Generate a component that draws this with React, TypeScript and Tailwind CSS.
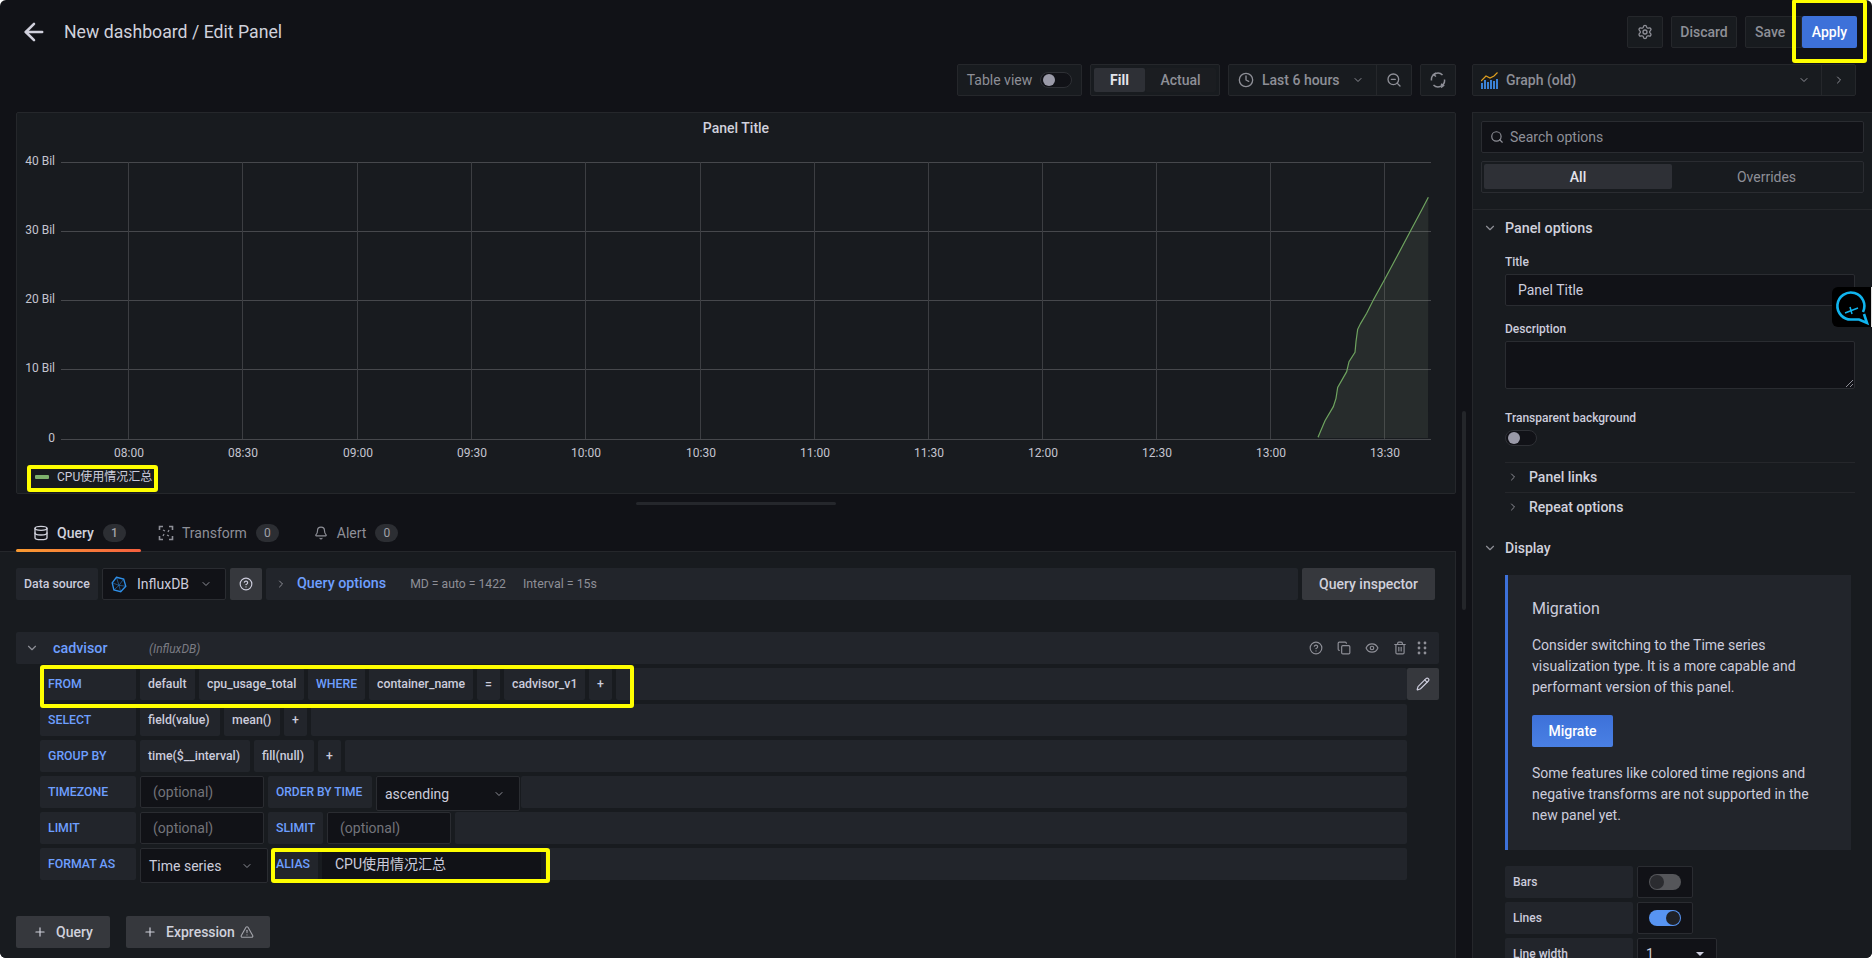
import React from "react";
import {
  ArrowLeft, Settings, Clock, ZoomOut, ChevronDown, ChevronRight, Search, Database, Bell,
  CircleHelp, Copy, Eye, Trash2, Pencil, Plus, TriangleAlert,
} from "lucide-react";

const Seg = ({ children, blue, cls = "" }: { children?: React.ReactNode; blue?: boolean; cls?: string }) => (
  <div className={`h-8 shrink-0 flex items-center whitespace-nowrap rounded-[2px] bg-[#22252b] px-2 text-[12.3px] font-medium ${blue ? "text-[#6e9fff]" : "text-[#ccccdc]"} ${cls}`}>{children}</div>
);
const Label = ({ children }: { children: React.ReactNode }) => <Seg blue cls="w-[96px]">{children}</Seg>;
const Fill = () => <div className="h-8 flex-1 rounded-[2px] bg-[#22252b]" />;
const Optional = ({ w }: { w: string }) => (
  <div className={`h-8 shrink-0 flex items-center rounded-[2px] border border-[#2a2c31] bg-[#111217] pl-[12px] text-sm text-[#73747a] ${w}`}>(optional)</div>
);
const Select = ({ text, w }: { text: string; w: string }) => (
  <div className={`h-[35px] shrink-0 flex items-center justify-between rounded-[2px] border border-[#2a2c31] bg-[#111217] pl-2 pr-[14px] text-sm text-[#ccccdc] ${w}`}>
    {text}
    <ChevronDown size={12} className="text-[#8e8f97]" />
  </div>
);
const Row = ({ children }: { children: React.ReactNode }) => <div className="flex h-8 w-[1367px] items-start gap-1">{children}</div>;

const Badge = ({ n }: { n: number }) => (
  <span className="ml-[9px] flex h-[18px] w-[23px] items-center justify-center rounded-full bg-[#2c2e33] text-xs text-[#a0a1a8]">{n}</span>
);

const xLabels = ["08:00", "08:30", "09:00", "09:30", "10:00", "10:30", "11:00", "11:30", "12:00", "12:30", "13:00", "13:30"];
const xs = [128, 242, 357, 471, 585, 700, 814, 928, 1042, 1156, 1270, 1384];
const ys: [string, number][] = [["40 Bil", 162], ["30 Bil", 231], ["20 Bil", 300], ["10 Bil", 369], ["0", 439]];
const curve = [[354, 772], [375, 722], [400, 680], [408, 655], [413, 622], [440, 575], [447, 545], [465, 517], [468, 485], [473, 448], [482, 430], [500, 400], [520, 360], [553, 300], [580, 250], [633, 150], [665, 90], [685, 52]]
  .map(([x, y]) => `${1200 + x / 3},${180 + y / 3}`).join(" ");

const Chart = () => (
  <svg width="1440" height="312" viewBox="16 150 1440 312" className="block" fontFamily="Roboto" fontSize="12" fill="#c4c4cf">
    {ys.map(([l, y]) => (
      <g key={l}>
        <line x1="61" x2="1431" y1={y + 0.5} y2={y + 0.5} stroke="#46484c" />
        <text x="55" y={y + 3} textAnchor="end">{l}</text>
      </g>
    ))}
    {xs.map((x, i) => (
      <g key={x}>
        <line x1={x + 0.5} x2={x + 0.5} y1="162" y2="439" stroke="#3c3e42" />
        <text x={x + 1} y="457" textAnchor="middle">{xLabels[i]}</text>
      </g>
    ))}
    <polygon points={`1318,438 ${curve} 1428,438`} fill="#8fa585" fillOpacity="0.13" />
    <polyline points={curve} fill="none" stroke="#6ea35f" strokeWidth="1.2" />
  </svg>
);

const TransformIcon = () => (
  <svg width="16" height="16" viewBox="0 0 16 16" fill="none" stroke="#8e8f97" strokeWidth="1.6">
    <path d="M1.500 5V1.500H5M11 1.500h3.500V5M14.500 11v3.500H11M5 14.500H1.500V11" />
    <path d="M5 5l2 1M11 5l-1 2M11 11l-2-1M5 11l1-2" strokeWidth="1.300" />
  </svg>
);
const SyncIcon = () => (
  <svg width="16" height="16" viewBox="0 0 16 16" fill="none" stroke="currentColor" strokeWidth="1.500">
    <path d="M1.500 8.500A6.500 6.500 0 0 1 12.500 3" />
    <path d="M14.500 7.500A6.500 6.500 0 0 1 3.500 13" />
    <path d="M6 1 3.500 2.500 6 4.500M11 12l2.500 1.500L11 15.500" transform="translate(0 0)" />
  </svg>
);
const GraphIcon = () => (
  <svg width="17" height="17" viewBox="0 0 17 17">
    <g fill="#3b82d6">
      <rect x="0" y="11" width="2" height="6" /><rect x="3" y="8" width="2" height="9" /><rect x="6" y="10" width="2" height="7" />
      <rect x="9" y="8" width="2" height="9" /><rect x="12" y="9" width="2" height="8" /><rect x="15" y="7" width="2" height="10" />
    </g>
    <path d="M0 9 L5 4 L9 6 L13 4 L16.500 0.500" fill="none" stroke="#e0a020" strokeWidth="1.200" />
  </svg>
);
const InfluxIcon = () => (
  <svg width="16" height="17" viewBox="0 0 18 20" fill="none" stroke="#2f8fe8" strokeWidth="1.600">
    <path d="M6 1.500 14.500 3.500 17 12 11 18.500 3 16.500 1 8Z" />
    <path d="M6 1.500 9 11 1 8M9 11l5.500-7.500M9 11l8 1M9 11 11 18.500M9 11 3 16.500" strokeWidth="0.600" />
  </svg>
);

const Frame = ({ cls }: { cls: string }) => <div className={`pointer-events-none absolute rounded-[3px] border-[4px] border-[#ffff00] ${cls}`} />;

const ToolBtn = ({ children, cls = "" }: { children: React.ReactNode; cls?: string }) => (
  <div className={`flex h-8 shrink-0 items-center justify-center rounded-[2px] border border-[#25272b] bg-[#181b1f] text-sm font-medium text-[#8e8f97] ${cls}`}>{children}</div>
);

const Knob = () => <div className="flex h-4 w-8 items-center rounded-full border border-[#2e3035] bg-[#111217] pl-[2px]"><div className="h-3 w-3 rounded-full bg-[#9a9aa8]" /></div>;

export default function App() {
  return (
    <div className="relative flex h-[958px] w-[1872px] flex-col overflow-hidden rounded-[6px] bg-[#111217] text-[#ccccdc] [font-family:Roboto,'Noto_Sans_CJK_SC',sans-serif]">
      {/* header */}
      <div className="flex h-16 shrink-0 items-center pl-[20px] pr-[15px]">
        <ArrowLeft size={28} strokeWidth={2.2} className="text-[#d0d0dc]" />
        <div className="ml-[16px] text-[17.7px] text-[#d0d1dc]">New dashboard / Edit Panel</div>
        <div className="ml-auto flex items-center">
          <ToolBtn cls="w-9"><Settings size={16} /></ToolBtn>
          <ToolBtn cls="ml-2 w-[66px]">Discard</ToolBtn>
          <ToolBtn cls="ml-2 w-[57px] !justify-start rounded-r-none pl-[9px]">Save</ToolBtn>
          <div className="flex h-8 w-[55px] items-center justify-center rounded-[2px] bg-[#3d71d9] text-sm font-medium text-white">Apply</div>
        </div>
      </div>
      {/* toolbar */}
      <div className="flex h-8 shrink-0 items-center pl-[957px]">
        <ToolBtn cls="w-[125px] gap-2"><span className="font-normal">Table view</span><Knob /></ToolBtn>
        <ToolBtn cls="ml-2 w-[130px] p-[3px]">
          <span className="flex h-full w-[51px] items-center justify-center rounded-[2px] bg-[#2e3036] font-bold text-[#e4e4ec]">Fill</span>
          <span className="flex h-full flex-1 items-center justify-center rounded-[2px] bg-[#1b1d21]">Actual</span>
        </ToolBtn>
        <ToolBtn cls="ml-2 w-[184px] !justify-start">
          <span className="flex h-full w-[148px] items-center border-r border-[#25272b] pl-[9px]">
            <Clock size={16} /><span className="ml-2">Last 6 hours</span><ChevronDown size={12} className="ml-[12px]" />
          </span>
          <span className="flex flex-1 items-center justify-center"><ZoomOut size={16} /></span>
        </ToolBtn>
        <ToolBtn cls="ml-2 w-9"><SyncIcon /></ToolBtn>
        <ToolBtn cls="ml-4 w-[384px] !justify-start">
          <span className="flex h-full w-[349px] items-center border-r border-[#25272b] pl-2 pr-[11px]">
            <GraphIcon /><span className="ml-2 font-medium">Graph (old)</span><ChevronDown size={12} className="ml-auto" />
          </span>
          <span className="flex flex-1 items-center justify-center"><ChevronRight size={12} /></span>
        </ToolBtn>
      </div>
      {/* main */}
      <div className="mt-4 flex min-h-0 flex-1">
        {/* left */}
        <div className="flex w-[1472px] shrink-0 flex-col">
          <div className="ml-4 flex h-[382px] w-[1440px] shrink-0 flex-col rounded-[2px] border border-[#25272b] bg-[#181b1f]">
            <div className="h-[37px] shrink-0 pt-[5px] text-center text-sm font-medium text-[#d0d1dc]">Panel Title</div>
            <div className="-ml-px"><Chart /></div>
            <div className="flex items-center pl-[18px] pt-[7px] text-xs text-[#ccccdc]">
              <span className="h-1 w-[14px] rounded-[1px] bg-[#7eb26d]" />
              <span className="ml-2">CPU使用情况汇总</span>
            </div>
          </div>
          <div className="ml-[636px] mt-[8px] h-[3px] w-[200px] shrink-0 rounded bg-[#25272c]" />
          {/* tabs */}
          <div className="mt-[11px] flex h-[36px] w-[1456px] shrink-0 items-stretch border-b border-[#25272b] pl-4 text-sm">
            <div className="relative flex w-[125px] items-center pl-[17px] pb-[2px] font-medium text-[#d0d1dc]">
              <Database size={16} /><span className="ml-2">Query</span><Badge n={1} />
              <div className="absolute bottom-[-1px] left-0 h-[3px] w-full rounded-[2px] bg-gradient-to-r from-[#f99a31] to-[#f55f3e]" />
            </div>
            <div className="ml-[17px] flex items-center pb-[2px] text-[#8e8f97]"><TransformIcon /><span className="ml-2">Transform</span><Badge n={0} /></div>
            <div className="ml-[35px] flex items-center pb-[2px] text-[#8e8f97]"><Bell size={14} /><span className="ml-[9px]">Alert</span><Badge n={0} /></div>
          </div>
          {/* query area */}
          <div className="w-[1456px] flex-1 border-r border-[#25272b] bg-[#181b1f] pl-4 pt-4">
            <div className="flex h-8 w-[1419px] items-center gap-1">
              <div className="flex h-8 w-[82px] items-center pl-2 rounded-[2px] bg-[#22252b] text-[12.3px] font-medium text-[#ccccdc]">Data source</div>
              <div className="flex h-8 w-[124px] items-center rounded-[2px] border border-[#2a2c31] bg-[#111217] pl-[8px] text-sm text-[#ccccdc]">
                <InfluxIcon /><span className="ml-[10px]">InfluxDB</span><ChevronDown size={12} className="ml-[11px] text-[#8e8f97]" />
              </div>
              <div className="flex h-8 w-8 items-center justify-center rounded-[2px] bg-[#36383d]"><CircleHelp size={14} className="text-[#ccccdc]" /></div>
              <div className="flex h-8 flex-1 items-center rounded-[2px] bg-[#22252b] pl-[9px] text-[12.2px] text-[#8e8f97]">
                <ChevronRight size={12} />
                <span className="ml-[10px] text-[14.3px] font-medium text-[#6e9fff]">Query options</span>
                <span className="ml-[24px]">MD = auto = 1422</span>
                <span className="ml-[17px] text-[12.4px]">Interval = 15s</span>
              </div>
              <div className="flex h-8 w-[133px] items-center justify-center rounded-[2px] bg-[#36383d] text-sm font-medium text-[#d0d1dc]">Query inspector</div>
            </div>
            <div className="mt-8 flex h-8 w-[1423px] items-center rounded-[2px] bg-[#22252b] pl-[9px] pr-[12px]">
              <ChevronDown size={14} className="text-[#8e8f97]" />
              <span className="ml-[14px] w-[96px] pt-[1px] text-[14.3px] font-medium text-[#6e9fff]">cadvisor</span>
              <span className="pt-[1px] text-xs italic text-[#7b7c83]">(InfluxDB)</span>
              <div className="ml-auto flex items-center text-[#8e8f97]">
                <CircleHelp size={14} /><Copy size={14} className="ml-[14px]" /><Eye size={14} className="ml-[14px]" /><Trash2 size={14} className="ml-[14px]" />
                <svg width="10" height="14" viewBox="0 0 10 14" fill="currentColor" className="ml-[10px]"><circle cx="2" cy="2" r="1.400" /><circle cx="8" cy="2" r="1.400" /><circle cx="2" cy="7" r="1.400" /><circle cx="8" cy="7" r="1.400" /><circle cx="2" cy="12" r="1.400" /><circle cx="8" cy="12" r="1.400" /></svg>
              </div>
            </div>
            <div className="ml-6 mt-1 flex flex-col gap-1">
              <div className="flex h-8 w-[1399px] items-start gap-1">
                <Label>FROM</Label><Seg cls="w-[55px]">default</Seg><Seg cls="w-[105px]">cpu_usage_total</Seg><Seg blue cls="w-[57px]">WHERE</Seg><Seg cls="w-[104px]">container_name</Seg><Seg cls="w-[23px] justify-center !px-0">=</Seg><Seg cls="w-[81px]">cadvisor_v1</Seg><Seg cls="w-[23px] justify-center !px-0">+</Seg>
                <div className="flex flex-1">
                  <Fill />
                  <div className="flex h-8 w-8 items-center justify-center rounded-[2px] bg-[#36383d]"><Pencil size={14} className="text-[#ccccdc]" /></div>
                </div>
              </div>
              <Row><Label>SELECT</Label><Seg cls="w-[80px]">field(value)</Seg><Seg cls="w-[56px]">mean()</Seg><Seg cls="w-[23px] justify-center !px-0">+</Seg><Fill /></Row>
              <Row><Label>GROUP BY</Label><Seg cls="w-[110px]">time($__interval)</Seg><Seg cls="w-[60px]">fill(null)</Seg><Seg cls="w-[23px] justify-center !px-0">+</Seg><Fill /></Row>
              <Row><Label>TIMEZONE</Label><Optional w="w-[124px]" /><Seg blue cls="w-[104px] text-[12px]">ORDER BY TIME</Seg><Select text="ascending" w="w-[144px]" /><div className="-ml-[3px] h-8 flex-1 rounded-[2px] bg-[#22252b]" /></Row>
              <Row><Label>LIMIT</Label><Optional w="w-[124px]" /><Seg blue cls="w-[55px]">SLIMIT</Seg><Optional w="w-[124px]" /><Fill /></Row>
              <Row>
                <Label>FORMAT AS</Label><Select text="Time series" w="w-[128px]" />
                <Seg blue cls="w-[46px] !px-1">ALIAS</Seg>
                <div className="flex h-8 w-[219px] shrink-0 items-center bg-[#111217] pl-[13px] text-sm text-[#ccccdc]">CPU使用情况汇总</div>
                <Fill />
              </Row>
            </div>
            <div className="mt-9 flex gap-4">
              <div className="flex h-8 w-[94px] items-center rounded-[2px] bg-[#36383d] pl-[17px] text-sm font-medium text-[#d0d1dc]"><Plus size={14} /><span className="ml-[9px]">Query</span></div>
              <div className="flex h-8 w-[144px] items-center rounded-[2px] bg-[#36383d] pl-[17px] text-sm font-medium text-[#d0d1dc]"><Plus size={14} /><span className="ml-[9px]">Expression</span><TriangleAlert size={14} className="ml-[5px] text-[#a0a1a8]" /></div>
            </div>
          </div>
        </div>
        {/* right */}
        <div className="w-[400px] shrink-0 border-l border-t border-[#25272b] bg-[#181b1f] text-sm">
          <div className="border-b border-[#25272b] px-2 pb-4 pt-2">
            <div className="flex h-8 items-center rounded-[2px] border border-[#2a2c31] bg-[#111217] pl-2 text-[#8e8f97]"><Search size={14} /><span className="ml-[6px]">Search options</span></div>
            <div className="mt-2 flex h-8 items-stretch rounded-[2px] border border-[#2a2c31] bg-[#181b1f] pb-[3px] pl-[2px] pr-[2px] pt-[2px]">
              <div className="flex w-[188px] items-center justify-center rounded-[2px] bg-[#2e3036] font-medium text-[#e4e4ec]">All</div>
              <div className="flex flex-1 items-center justify-center text-[#8e8f97]">Overrides</div>
            </div>
          </div>
          <div className="flex h-[36px] items-center pl-[10px] text-[14.3px] font-medium text-[#d0d1dc]"><ChevronDown size={14} className="text-[#8e8f97]" /><span className="ml-[8px]">Panel options</span></div>
          <div className="ml-8 w-[350px] pt-[8px]">
            <div className="text-xs font-medium leading-[16px] text-[#ccccdc]">Title</div>
            <div className="mt-[4px] flex h-8 items-center rounded-[2px] border border-[#2a2c31] bg-[#111217] pl-[12px] text-[#ccccdc]">Panel Title</div>
            <div className="mt-[15px] text-xs font-medium leading-[16px] text-[#ccccdc]">Description</div>
            <div className="relative mt-[4px] h-[48px] rounded-[2px] border border-[#2a2c31] bg-[#111217]">
              <svg width="7" height="7" viewBox="0 0 7 7" className="absolute bottom-[1px] right-[1px]" stroke="#8e8f97"><path d="M0 7 7 0M4 7l3-3" /></svg>
            </div>
            <div className="mt-[21px] text-xs font-medium leading-[16px] text-[#ccccdc]">Transparent background</div>
            <div className="mt-[4px]"><Knob /></div>
            <div className="mt-[16px] flex h-[30px] items-center border-t border-[#25272b] pb-[2px] pl-[2px] font-medium text-[#d0d1dc]"><ChevronRight size={12} className="text-[#8e8f97]" /><span className="ml-[10px]">Panel links</span></div>
            <div className="flex h-[30px] items-center border-t border-[#25272b] pb-[2px] pl-[2px] font-medium text-[#d0d1dc]"><ChevronRight size={12} className="text-[#8e8f97]" /><span className="ml-[10px]">Repeat options</span></div>
          </div>
          <div className="mt-[8px] flex h-[36px] items-center pl-[10px] font-medium text-[#d0d1dc]"><ChevronDown size={14} className="text-[#8e8f97]" /><span className="ml-[8px]">Display</span></div>
          <div className="ml-8 mt-[9px] h-[275px] w-[346px] border-l-[3px] border-[#3d71d9] bg-[#22252b] pl-[24px] pr-[16px] pt-[23px] leading-[21px] text-[#ccccdc]">
            <div className="text-base leading-[22px]">Migration</div>
            <div className="mt-[15px]">Consider switching to the Time series visualization type. It is a more capable and performant version of this panel.</div>
            <div className="mt-[17px] flex h-8 w-[81px] items-center justify-center rounded-[2px] bg-gradient-to-b from-[#3d71d9] to-[#4a80e4] font-medium text-white">Migrate</div>
            <div className="mt-[16px]">Some features like colored time regions and negative transforms are not supported in the new panel yet.</div>
          </div>
          <div className="ml-8 mt-4 flex flex-col gap-1">
            <div className="flex gap-1">
              <div className="flex h-8 w-[128px] items-center rounded-[2px] bg-[#22252b] pl-2 text-xs font-medium">Bars</div>
              <div className="flex h-8 w-[56px] items-center justify-center rounded-[2px] border border-[#2a2c31] bg-[#111217]">
                <div className="flex h-4 w-8 items-center rounded-full bg-[#55565a] pl-[1px]"><div className="h-[14px] w-[14px] rounded-full bg-[#2b2c30]" /></div>
              </div>
            </div>
            <div className="flex gap-1">
              <div className="flex h-8 w-[128px] items-center rounded-[2px] bg-[#22252b] pl-2 text-xs font-medium">Lines</div>
              <div className="flex h-8 w-[56px] items-center justify-center rounded-[2px] border border-[#2a2c31] bg-[#111217]">
                <div className="flex h-4 w-8 items-center justify-end rounded-full bg-[#5794f2] pr-[1px]"><div className="h-[14px] w-[14px] rounded-full bg-[#1f2126]" /></div>
              </div>
            </div>
            <div className="flex gap-1">
              <div className="flex h-8 w-[128px] items-center rounded-[2px] bg-[#22252b] pl-2 text-xs font-medium">Line width</div>
              <div className="flex h-8 w-[80px] items-center justify-between rounded-[2px] border border-[#2a2c31] bg-[#111217] pl-2 pr-3">1<span className="h-0 w-0 border-x-[4px] border-t-[4px] border-x-transparent border-t-[#ccccdc]" /></div>
            </div>
          </div>
        </div>
      </div>
      {/* overlays */}
      <div className="absolute left-[1462px] top-[411px] h-[199px] w-[4px] rounded bg-[#24262a]" />
      <Frame cls="left-[1792px] -top-[1px] h-[64px] w-[75px]" />
      <Frame cls="left-[27px] top-[465px] h-[27px] w-[131px]" />
      <Frame cls="left-[40px] top-[665px] h-[43px] w-[594px]" />
      <Frame cls="left-[271px] top-[848px] h-[35px] w-[279px]" />
      <div className="absolute left-[1832px] top-[287px] h-10 w-10 rounded-l-md border-r border-[#ddd] bg-black">
        <svg width="40" height="40" viewBox="0 0 40 40" fill="none" stroke="#10b4ee" strokeWidth="2.600">
          <path d="M31 25A13.500 13.500 0 1 0 20 32.500L27 32.500L35 36L32 27" />
          <path d="M13 26L26 21M18 20L20 27" strokeWidth="1.500" />
        </svg>
      </div>
    </div>
  );
}
